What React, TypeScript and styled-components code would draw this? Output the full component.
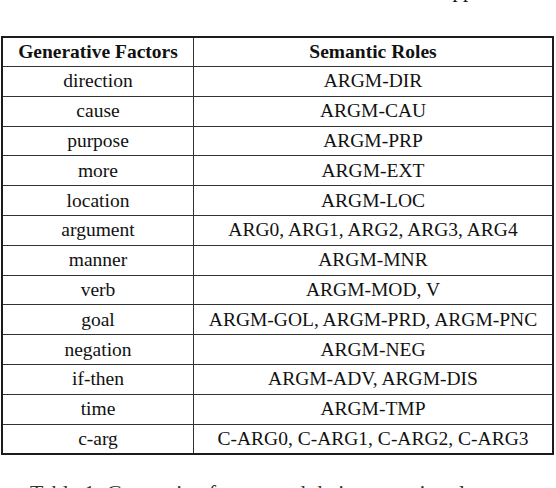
import React from 'react';
import styled, { createGlobalStyle } from 'styled-components';

const GlobalStyle = createGlobalStyle`
  html, body {
    margin: 0;
    padding: 0;
    background: #ffffff;
    overflow: hidden;
  }
`;

const serif = '"Liberation Serif", "Times New Roman", serif';

const Page = styled.div`
  width: 556px;
  height: 488px;
  overflow: hidden;
  font-family: ${serif};
  color: #111;
`;

// last line of the paragraph above, mostly cut off by the top edge
const PrevLine = styled.p`
  margin: -22px 0 0 442px;
  font-size: 21px;
  line-height: 24px;
  height: 24px;
`;

const Table = styled.table`
  margin: 34px 0 0 1px;
  width: 553px;
  border-collapse: collapse;
  border: 2px solid #1c1c1c;
  font-family: ${serif};
  font-size: 19.5px;
  color: #111;
`;

const HeadCell = styled.th<{ $wide?: boolean }>`
  height: 28px;
  padding: 0;
  font-weight: bold;
  text-align: center;
  border: 1px solid #333;
  line-height: 22px;
  width: ${(p) => (p.$wide ? 'auto' : '190px')};
`;

const Cell = styled.td`
  height: 28.8px;
  padding: 0;
  text-align: center;
  border: 1px solid #333;
  line-height: 22px;
`;

// caption below the table, only its top part shows in the crop
const Caption = styled.p`
  margin: 26px 0 0 30px;
  font-size: 22px;
  line-height: 24px;
  color: #333;
`;

const rows: [string, string][] = [
  ['direction', 'ARGM-DIR'],
  ['cause', 'ARGM-CAU'],
  ['purpose', 'ARGM-PRP'],
  ['more', 'ARGM-EXT'],
  ['location', 'ARGM-LOC'],
  ['argument', 'ARG0, ARG1, ARG2, ARG3, ARG4'],
  ['manner', 'ARGM-MNR'],
  ['verb', 'ARGM-MOD, V'],
  ['goal', 'ARGM-GOL, ARGM-PRD, ARGM-PNC'],
  ['negation', 'ARGM-NEG'],
  ['if-then', 'ARGM-ADV, ARGM-DIS'],
  ['time', 'ARGM-TMP'],
  ['c-arg', 'C-ARG0, C-ARG1, C-ARG2, C-ARG3'],
];

const App: React.FC = () => {
  return (
    <Page>
      <GlobalStyle />
      <PrevLine>upp</PrevLine>
      <Table>
        <thead>
          <tr>
            <HeadCell>Generative Factors</HeadCell>
            <HeadCell $wide>Semantic Roles</HeadCell>
          </tr>
        </thead>
        <tbody>
          {rows.map(([factor, roles]) => (
            <tr key={factor}>
              <Cell>{factor}</Cell>
              <Cell>{roles}</Cell>
            </tr>
          ))}
        </tbody>
      </Table>
      <Caption>Table 1: Generative factors and their semantic roles.</Caption>
    </Page>
  );
};

export default App;
